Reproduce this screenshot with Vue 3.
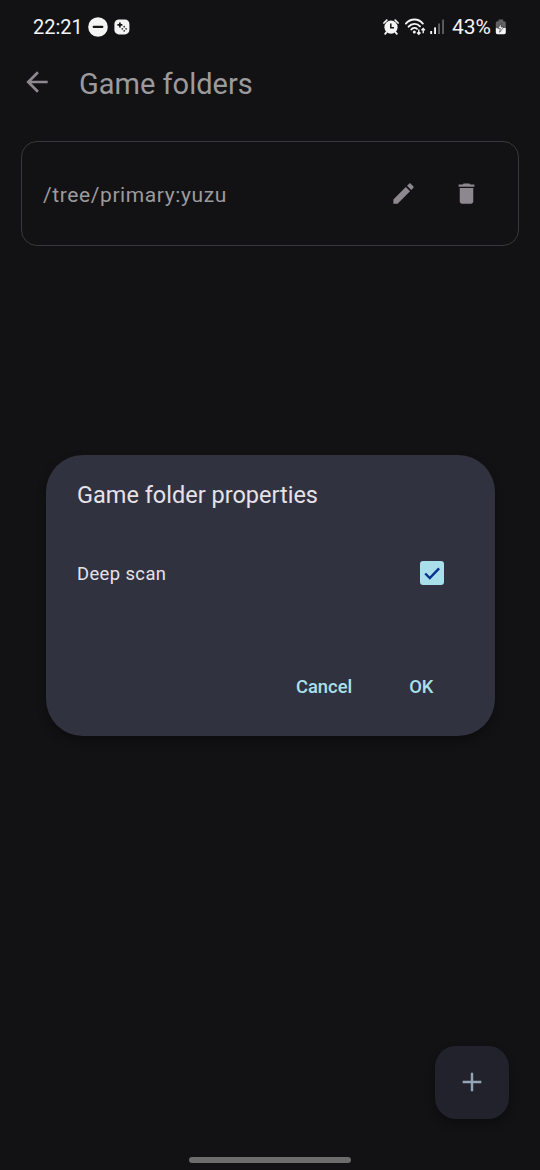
<script setup>
const folder = '/tree/primary:yuzu'
</script>

<template>
  <div class="screen">
    <header class="status">
      <span class="clock">22:21</span>
      <svg class="dnd" width="20" height="20" viewBox="0 0 20 20">
        <circle cx="10" cy="10" r="9.8" fill="#f4f4f5" />
        <rect x="4.6" y="8.8" width="10.8" height="2.3" rx="1" fill="#131315" />
      </svg>
      <svg class="game" width="16" height="16" viewBox="0 0 16 16">
        <rect x="0.4" y="0.4" width="15" height="15" rx="4.5" fill="#f4f4f5" />
        <path d="M5.9 3.4v5M3.4 5.9h5" stroke="#131315" stroke-width="1.7" />
        <g fill="#333">
          <circle cx="10.2" cy="7.7" r="0.9" />
          <circle cx="8.3" cy="9.8" r="0.9" />
          <circle cx="12.1" cy="9.8" r="0.9" />
          <circle cx="10.2" cy="11.8" r="0.9" />
        </g>
      </svg>
      <span class="grow"></span>
      <svg class="alarm" width="16" height="16" viewBox="0 0 16 16">
        <circle cx="8" cy="8.2" r="6.6" fill="#f4f4f5" />
        <path d="M0.9 4 3.8 1.1M15.1 4 12.2 1.1" stroke="#f4f4f5" stroke-width="1.7" stroke-linecap="round" />
        <path d="M3.6 13 2.2 14.8M12.4 13l1.4 1.8" stroke="#f4f4f5" stroke-width="1.9" stroke-linecap="round" />
        <path d="M7.8 4.4v4.3h3.2" fill="none" stroke="#131315" stroke-width="1.5" />
      </svg>
      <svg class="wifi" width="22" height="18" viewBox="0 0 22 18">
        <g fill="none" stroke="#f4f4f5" stroke-width="1.9" stroke-linecap="round">
          <path d="M0.9 5.6C5.6 0.2 13.4 0.2 17.8 5.6" />
          <path d="M3.6 8.7C6.8 5 12 5 15 8.3" />
          <path d="M6.3 11.5C7.8 9.6 10.6 9.4 12 10.8" />
        </g>
        <circle cx="9.3" cy="13.9" r="1.5" fill="#f4f4f5" />
        <path d="M13.8 11.6v4.4M12.1 14.5l1.7 1.7 1.7-1.7M18.2 15.2v-4.6M16.5 12.2l1.7-1.7 1.7 1.7" fill="none" stroke="#f4f4f5" stroke-width="1.4" />
      </svg>
      <svg class="signal" width="15" height="16" viewBox="0 0 15 16">
        <rect x="0.2" y="12" width="1.9" height="3" fill="#f4f4f5" />
        <rect x="4.1" y="8.4" width="1.9" height="6.6" fill="#f4f4f5" />
        <rect x="8.1" y="4.5" width="1.9" height="10.5" fill="#5d5d5f" />
        <rect x="12.1" y="0.6" width="1.9" height="14.4" fill="#5d5d5f" />
      </svg>
      <span class="percent">43%</span>
      <svg class="battery" width="12" height="16" viewBox="0 0 12 16">
        <path d="M3.6 0.6h4.6v1.7h1a1.6 1.6 0 0 1 1.6 1.6V9H0.8V3.9a1.6 1.6 0 0 1 1.6-1.6h1.2z" fill="#626264" />
        <path d="M0.8 9h10v4.6a1.6 1.6 0 0 1-1.6 1.6H2.4a1.6 1.6 0 0 1-1.6-1.6z" fill="#f4f4f5" />
        <path d="M6.5 4.3 2.7 9.4h2.6l-.6 3.9 4.1-5.3H6z" fill="#f4f4f5" stroke="#29292b" stroke-width="0.6" />
      </svg>
    </header>

    <div class="toolbar">
      <svg class="back" width="32" height="32" viewBox="0 0 24 24">
        <path d="M20 11H7.83l5.59-5.59L12 4l-8 8 8 8 1.41-1.41L7.83 13H20v-2z" />
      </svg>
      <h1>Game folders</h1>
    </div>

    <section class="card">
      <span class="path">{{ folder }}</span>
      <svg class="edit" width="27" height="27" viewBox="0 0 24 24">
        <path d="M3 17.25V21h3.75L17.81 9.94l-3.75-3.75L3 17.25zM20.71 7.04c.39-.39.39-1.02 0-1.41l-2.34-2.34c-.39-.39-1.02-.39-1.41 0l-1.83 1.83 3.75 3.75 1.83-1.83z" />
      </svg>
      <svg class="trash" width="27" height="27" viewBox="0 0 24 24">
        <path d="M6 19c0 1.1.9 2 2 2h8c1.1 0 2-.9 2-2V7H6v12zM19 4h-3.5l-1-1h-5l-1 1H5v2h14V4z" />
      </svg>
    </section>

    <div class="dialog">
      <h2>Game folder properties</h2>
      <div class="option">
        <span class="label">Deep scan</span>
        <span class="check">
          <svg width="24" height="24" viewBox="0 0 24 24">
            <path d="M5.2 12.5 9.8 17 19.1 7.4" fill="none" stroke="#08308f" stroke-width="2.4" />
          </svg>
        </span>
      </div>
      <div class="actions">
        <span class="cancel">Cancel</span>
        <span class="ok">OK</span>
      </div>
    </div>

    <div class="fab">
      <svg width="32" height="32" viewBox="0 0 24 24">
        <path d="M19 12.9h-6.1v6.1h-1.8v-6.1H5v-1.8h6.1V5h1.8v6.1H19z" fill="#94a3b5" />
      </svg>
    </div>
    <div class="home"></div>
  </div>
</template>

<style>
body {
  background: #121214;
}
</style>

<style scoped>
.screen {
  position: relative;
  width: 540px;
  height: 1170px;
  overflow: hidden;
  background: #121214;
  font-family: Roboto, "Liberation Sans", sans-serif;
}
svg {
  display: block;
  flex: none;
}
span,
h1,
h2 {
  white-space: nowrap;
}
.status {
  display: flex;
  align-items: center;
  box-sizing: border-box;
  height: 54px;
  padding: 0 33px 0 33px;
  color: #f4f4f5;
  font-size: 20px;
}
.clock {
  width: 55px;
}
.game {
  margin-left: 6px;
}
.grow {
  flex: 1;
}
.wifi {
  margin-left: 6px;
}
.signal {
  margin-left: 3px;
}
.percent {
  width: 42px;
  margin: -1px 0 0 7px;
  font-size: 21px;
}
.battery {
  margin-left: 1px;
}
.toolbar {
  display: flex;
  align-items: center;
  height: 58px;
  padding-left: 21px;
}
.back {
  margin-top: -2px;
  fill: #8d898f;
}
h1 {
  margin: 2px 0 0 26px;
  color: #9d9a9e;
  font-size: 29px;
  font-weight: 400;
  line-height: 36px;
}
.card {
  display: flex;
  align-items: center;
  box-sizing: border-box;
  width: 498px;
  height: 105px;
  margin: 28.5px 0 0 21px;
  padding: 0 38px 0 21px;
  border: 1px solid #38373b;
  border-radius: 16px;
}
.path {
  flex: 1;
  margin-top: 3px;
  color: #9d9a9e;
  font-size: 21px;
  letter-spacing: 0.6px;
}
.edit,
.trash {
  fill: #8d888f;
}
.trash {
  margin-left: 36px;
}
.dialog {
  position: absolute;
  left: 45.5px;
  top: 455px;
  box-sizing: border-box;
  width: 449px;
  height: 281px;
  padding: 24px 51px 0 31.5px;
  border-radius: 37px;
  background: #313240;
  box-shadow: 0 5px 10px rgba(0, 0, 0, 0.3);
}
h2 {
  margin: 0;
  color: #e6e2e8;
  font-size: 23.5px;
  font-weight: 400;
  line-height: 32px;
}
.option {
  display: flex;
  align-items: center;
  justify-content: space-between;
  margin-top: 50px;
}
.label {
  color: #e6e2e8;
  font-size: 18.4px;
  letter-spacing: 0.4px;
}
.check {
  border-radius: 3px;
  background: #a9deeb;
}
.actions {
  display: flex;
  justify-content: flex-end;
  gap: 57px;
  margin-top: 90px;
  padding-right: 10px;
  color: #a9e0ee;
  font-size: 18.4px;
  font-weight: 500;
  line-height: 24px;
}
.fab {
  position: absolute;
  left: 435px;
  top: 1045.5px;
  display: grid;
  place-items: center;
  width: 73.5px;
  height: 73.5px;
  border-radius: 21px;
  background: #21222c;
  box-shadow: 0 5px 10px rgba(0, 0, 0, 0.3);
}
.home {
  position: absolute;
  left: 189px;
  top: 1157px;
  width: 162px;
  height: 6px;
  border-radius: 3px;
  background: #6c6c6d;
}
</style>
